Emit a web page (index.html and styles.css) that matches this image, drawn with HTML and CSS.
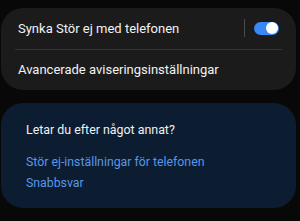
FILE: index.html
```html
<!DOCTYPE html>
<html lang="sv">
<head>
<meta charset="utf-8">
<link rel="stylesheet" href="styles.css">
</head>
<body>
<div class="page">
  <section class="card settings">
    <div class="row">
      <span class="label">Synka Stör ej med telefonen</span>
      <span class="vsep"></span>
      <span class="toggle"><span class="knob"></span></span>
    </div>
    <div class="hsep"></div>
    <div class="row">
      <span class="label">Avancerade aviseringsinställningar</span>
    </div>
  </section>
  <section class="card suggest">
    <div class="title">Letar du efter något annat?</div>
    <a class="link">Stör ej-inställningar för telefonen</a>
    <a class="link">Snabbsvar</a>
  </section>
</div>
</body>
</html>
```
FILE: styles.css
```css
html, body {
  margin: 0;
  background: #080808;
}
body {
  width: 300px;
  height: 221px;
  overflow: hidden;
  font-family: Roboto, "Noto Sans", sans-serif;
}
.page {
  display: flex;
  flex-direction: column;
  gap: 13px;
  padding: 8px 4px 0 1px;
}
.card {
  border-radius: 22px;
}
.settings {
  background: #1b1b1b;
  height: 82px;
  display: flex;
  flex-direction: column;
  padding: 0 14px 0 14px;
  box-sizing: border-box;
}
.row {
  height: 41px;
  display: flex;
  align-items: center;
  padding-left: 3px;
}
.label {
  color: #f2f2f2;
  font-size: 13px;
  flex: 1;
}
.hsep {
  height: 1px;
  background: #333;
}
.vsep {
  width: 1px;
  height: 18px;
  background: #4a4a4a;
  margin-right: 9px;
}
.toggle {
  width: 25px;
  height: 13px;
  border-radius: 7px;
  background: #3a88f5;
  position: relative;
  margin-right: 3px;
}
.knob {
  position: absolute;
  right: 1px;
  top: 0.5px;
  width: 12px;
  height: 12px;
  border-radius: 50%;
  background: #fff;
}
.suggest {
  background: #0c1d31;
  height: 105px;
  box-sizing: border-box;
  padding: 19px 20px 0 25px;
  display: flex;
  flex-direction: column;
}
.title {
  color: #eef0f3;
  font-size: 12.4px;
  margin-bottom: 15px;
}
.link {
  color: #5b97e6;
  font-size: 12.3px;
  line-height: 21px;
}
```
